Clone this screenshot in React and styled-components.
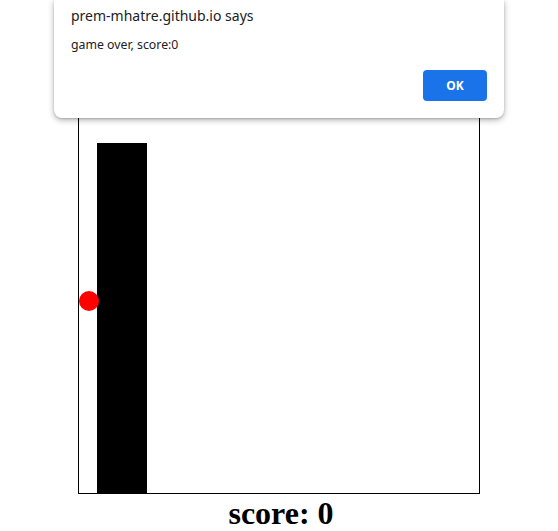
import styled, { createGlobalStyle } from 'styled-components';

const GlobalStyle = createGlobalStyle`
  html, body {
    margin: 0;
    padding: 0;
    background: #fff;
  }
`;

const Page = styled.div`
  position: relative;
  display: flex;
  flex-direction: column;
  align-items: center;
  padding-top: 92px;
  min-height: 531px;
  box-sizing: border-box;
`;

const Board = styled.div`
  position: relative;
  width: 400px;
  height: 400px;
  border: 1px solid #000;
  overflow: hidden;
`;

const Pillar = styled.div`
  position: absolute;
  left: ${(p) => p.$x}px;
  top: ${(p) => p.$top}px;
  bottom: 0;
  width: 50px;
  background: #000;
`;

const Ball = styled.div`
  position: absolute;
  left: ${(p) => p.$x}px;
  top: ${(p) => p.$y}px;
  width: 20px;
  height: 20px;
  border-radius: 50%;
  background: #ff0000;
`;

const Score = styled.div`
  padding-left: 4px;
  margin-top: 1px;
  font-family: 'Liberation Serif', 'Times New Roman', serif;
  font-weight: bold;
  font-size: 32px;
  line-height: 37px;
  color: #000;
  text-align: center;
`;

const Dialog = styled.div`
  position: absolute;
  top: 0;
  left: 54px;
  width: 450px;
  box-sizing: border-box;
  padding: 6px 17px 17px 17px;
  background: #fff;
  border-radius: 0 0 8px 8px;
  box-shadow: 0 2px 6px rgba(0, 0, 0, 0.3), 0 1px 2px rgba(0, 0, 0, 0.15);
  font-family: 'Noto Sans', 'Open Sans', sans-serif;
  display: flex;
  flex-direction: column;
`;

const Title = styled.div`
  font-size: 14px;
  line-height: 20px;
  color: #202124;
`;

const Message = styled.div`
  margin-top: 10px;
  font-size: 12.3px;
  line-height: 18px;
  color: #202124;
`;

const Actions = styled.div`
  margin-top: 16px;
  display: flex;
  justify-content: flex-end;
`;

const OkButton = styled.button`
  width: 64px;
  height: 31px;
  border: none;
  border-radius: 4px;
  background: #1a73e8;
  color: #fff;
  font-family: 'Noto Sans', 'Open Sans', sans-serif;
  font-weight: bold;
  font-size: 12px;
  cursor: pointer;
`;

export default function App() {
  return (
    <>
      <GlobalStyle />
      <Page>
        <Board>
          <Pillar $x={18} $top={50} />
          <Ball $x={0} $y={198} />
        </Board>
        <Score>score: 0</Score>
        <Dialog>
          <Title>prem-mhatre.github.io says</Title>
          <Message>game over, score:0</Message>
          <Actions>
            <OkButton>OK</OkButton>
          </Actions>
        </Dialog>
      </Page>
    </>
  );
}
